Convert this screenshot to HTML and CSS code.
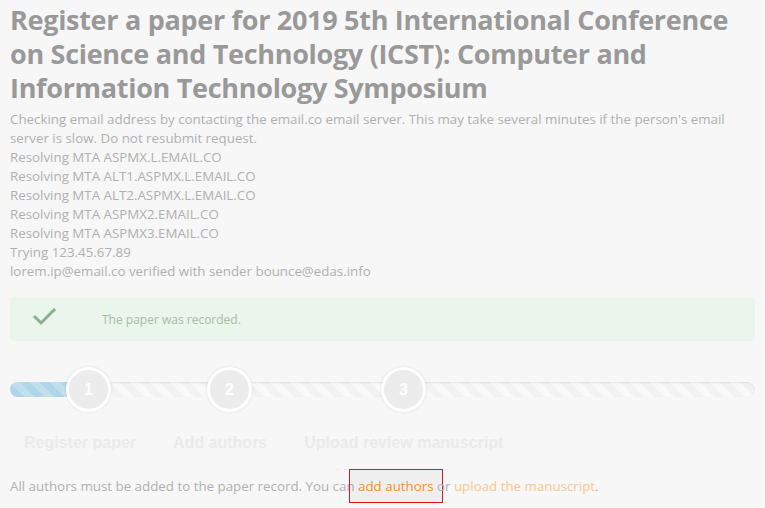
FILE: index.html
```html
<!DOCTYPE html>
<html>
<head>
<meta charset="utf-8">
<link rel="stylesheet" href="styles.css">
</head>
<body>
<div class="page">
  <h1 class="title">Register a paper for 2019 5th International Conference on Science and Technology (ICST): Computer and Information Technology Symposium</h1>
  <div class="log">
    <p>Checking email address by contacting the email.co email server. This may take several minutes if the person's email server is slow. Do not resubmit request.</p>
    <p>Resolving MTA ASPMX.L.EMAIL.CO</p>
    <p>Resolving MTA ALT1.ASPMX.L.EMAIL.CO</p>
    <p>Resolving MTA ALT2.ASPMX.L.EMAIL.CO</p>
    <p>Resolving MTA ASPMX2.EMAIL.CO</p>
    <p>Resolving MTA ASPMX3.EMAIL.CO</p>
    <p>Trying 123.45.67.89</p>
    <p>lorem.ip@email.co verified with sender bounce@edas.info</p>
  </div>
  <div class="alert">
    <svg class="check" width="26" height="20" viewBox="0 0 26 20"><polyline points="2,8 9,15 23,1" fill="none" stroke="#8eae91" stroke-width="3"/></svg>
    <span class="alert-text">The paper was recorded.</span>
  </div>
  <div class="steps">
    <div class="track"><div class="fill"></div></div>
    <div class="circles">
      <div class="circle c1">1</div>
      <div class="circle c2">2</div>
      <div class="circle c3">3</div>
    </div>
  </div>
  <div class="labels">
    <span>Register paper</span>
    <span>Add authors</span>
    <span>Upload review manuscript</span>
  </div>
  <p class="note">All authors must be added to the paper record. You can <a class="link focus" href="#">add authors</a> or <a class="link light" href="#">upload the manuscript</a>.</p>
</div>
</body>
</html>
```
FILE: styles.css
```css
html, body { margin: 0; padding: 0; background: #f7f7f7; }
body { font-family: "Open Sans", "Liberation Sans", sans-serif; }
.page { padding: 0 10px 10px 10px; width: 745px; }
.title {
  margin: 3px 0 0 0;
  font-family: "Open Sans", sans-serif;
  font-weight: 700;
  font-size: 27px;
  line-height: 34px;
  color: #999999;
  letter-spacing: -0.3px;
}
.log { margin-top: 5px; font-size: 13.33px; line-height: 19px; color: #b0b0b0; }
.log p { margin: 0; }
.alert {
  margin-top: 16px;
  height: 44px;
  background: #eaf5ec;
  border-radius: 4px;
  display: flex;
  align-items: center;
}
.check { margin-left: 22px; margin-top: -3px; }
.alert-text { margin-left: 44px; font-size: 12px; color: #a2bea5; }
.steps { position: relative; margin-top: 26px; height: 45px; }
.track {
  position: absolute; left: 0; right: 0; top: 15px; height: 15px;
  border-radius: 8px;
  background-color: #f2f2f2;
  background-image: linear-gradient(45deg, rgba(255,255,255,.55) 25%, transparent 25%, transparent 50%, rgba(255,255,255,.55) 50%, rgba(255,255,255,.55) 75%, transparent 75%, transparent);
  background-size: 20px 20px;
  box-shadow: inset 0 1px 2px rgba(0,0,0,.09);
}
.fill {
  width: 70px; height: 100%;
  border-radius: 8px 0 0 8px;
  background-color: #aed7e7;
  background-image: linear-gradient(45deg, rgba(255,255,255,.22) 25%, transparent 25%, transparent 50%, rgba(255,255,255,.22) 50%, rgba(255,255,255,.22) 75%, transparent 75%, transparent);
  background-size: 20px 20px;
}
.circles { position: relative; display: flex; padding-left: 56px; }
.circle {
  width: 39px; height: 39px;
  border: 3px solid #ffffff;
  border-radius: 50%;
  background: #ececec;
  box-shadow: 0 0 3px rgba(0,0,0,.12);
  color: #ffffff;
  font-family: "Liberation Sans", Arial, sans-serif;
  font-weight: 700;
  font-size: 16px;
  display: flex; align-items: center; justify-content: center;
}
.c2 { margin-left: 96px; }
.c3 { margin-left: 129px; }
.labels {
  margin-top: 21px;
  display: flex; gap: 37px; padding-left: 14px;
  font-family: "Liberation Sans", Arial, sans-serif;
  font-weight: 700; font-size: 16px; line-height: 20px;
  color: #eaeaea;
}
.note { margin: 23px 0 0 0; font-size: 13.33px; line-height: 19px; color: #b0b0b0; }
.link { color: #fdc58f; text-decoration: none; }
.focus {
  display: inline-block;
  color: #f7921e;
  line-height: 19px;
  padding: 7px 8px 6px 8px;
  margin: -7px -9px -7px -9px;
  border: 1px solid #d81818;
  background: rgba(0,0,0,0.03);
}
```
